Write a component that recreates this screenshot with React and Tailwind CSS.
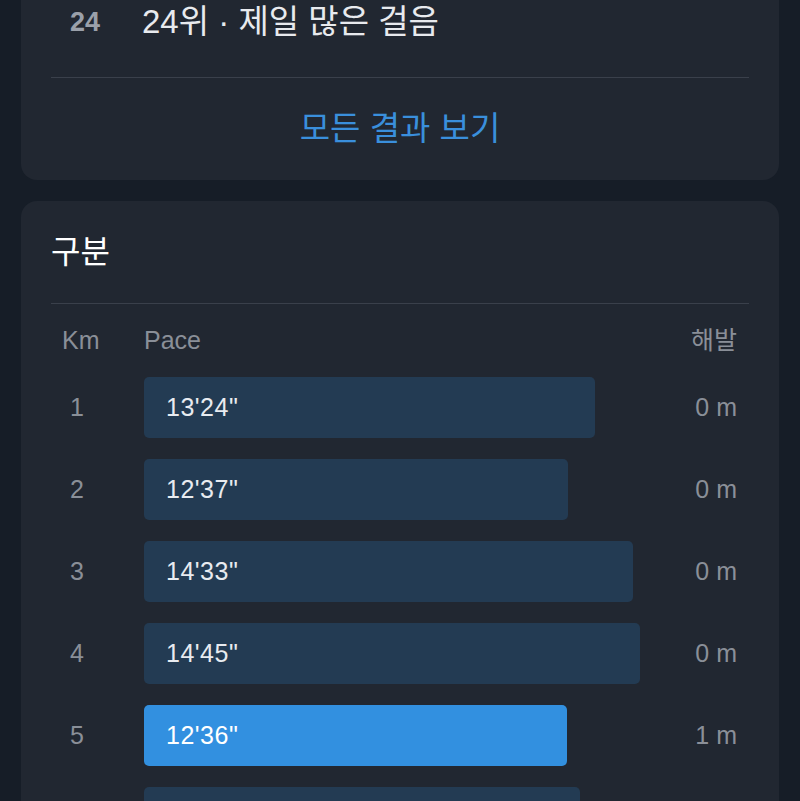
import React from "react";

const splits = [
  { km: 1, pace: "13'24\"", width: 451, elev: "0 m" },
  { km: 2, pace: "12'37\"", width: 424, elev: "0 m" },
  { km: 3, pace: "14'33\"", width: 489, elev: "0 m" },
  { km: 4, pace: "14'45\"", width: 496, elev: "0 m" },
  { km: 5, pace: "12'36\"", width: 423, elev: "1 m", best: true },
  { km: 6, pace: "12'58\"", width: 436, elev: "0 m" },
];

const font = {
  fontFamily: "'Liberation Sans', 'Noto Sans CJK KR', sans-serif",
};

function App() {
  return (
    <div
      className="h-[801px] overflow-hidden bg-[#161d27] px-[21px]"
      style={font}
    >
      {/* top card, cut off by the top of the screen */}
      <div className="-mt-[60px] rounded-[16px] bg-[#212731] px-[30px] pt-[52px]">
        <div className="flex h-[60px] items-center">
          <span className="w-[91px] pl-[19px] text-[27px] font-bold text-[#9aa0aa]">
            24
          </span>
          <span className="text-[33px] text-[#e8eaee]">24위 · 제일 많은 걸음</span>
        </div>
        <div className="mt-[25px] h-px bg-[#3a404b]" />
        <div className="flex h-[102px] items-center justify-center">
          <span className="text-[33px] text-[#3a8fdc]">모든 결과 보기</span>
        </div>
      </div>

      {/* splits card */}
      <div className="mt-[21px] rounded-[16px] bg-[#212731] px-[30px] pb-[40px]">
        <div className="flex h-[102px] items-center">
          <h2 className="text-[32px] text-white">구분</h2>
        </div>
        <div className="h-px bg-[#3a404b]" />
        <div className="flex h-[73px] items-center text-[25px] text-[#8a8f98]">
          <span className="w-[93px] pl-[11px]">Km</span>
          <span className="flex-1">Pace</span>
          <span className="pr-[12px]">해발</span>
        </div>
        <div className="flex flex-col gap-[21px]">
          {splits.map((s) => (
            <div key={s.km} className="flex h-[61px] items-center">
              <span className="w-[93px] pl-[12px]">
                <span className="block w-[28px] text-center text-[25px] text-[#8a8f98]">
                  {s.km}
                </span>
              </span>
              <div className="flex-1">
                <div
                  className={`flex h-[61px] items-center rounded-[5px] pl-[22px] text-[25px] tracking-[0.5px] text-[#e8ebf0] ${
                    s.best ? "bg-[#3290e0] text-white" : "bg-[#233b53]"
                  }`}
                  style={{ width: s.width }}
                >
                  {s.pace}
                </div>
              </div>
              <span className="pr-[12px] text-[25px] text-[#8a8f98]">{s.elev}</span>
            </div>
          ))}
        </div>
      </div>
    </div>
  );
}

export default App;
